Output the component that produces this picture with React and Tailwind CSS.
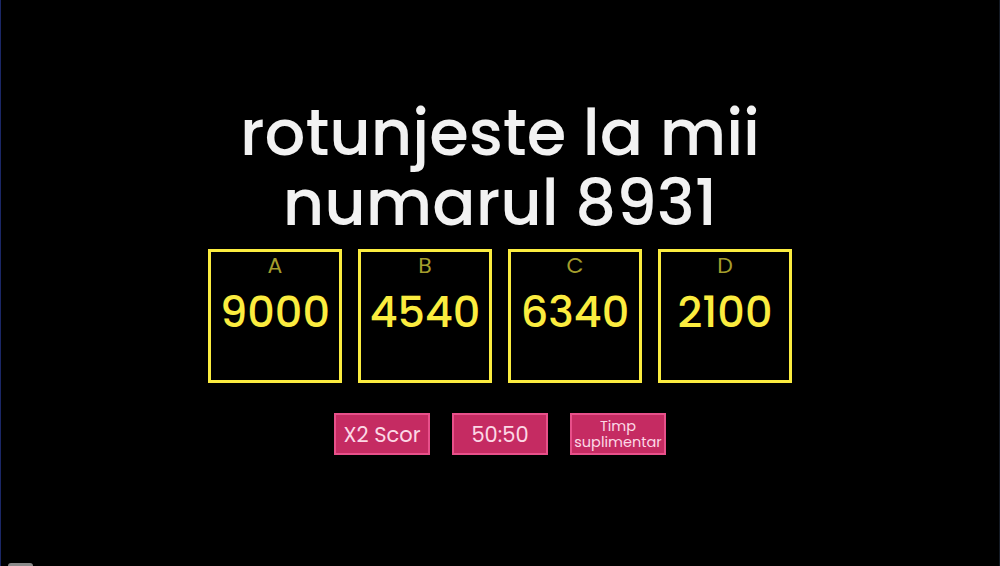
const OPTIONS = [
  { letter: 'A', value: '9000' },
  { letter: 'B', value: '4540' },
  { letter: 'C', value: '6340' },
  { letter: 'D', value: '2100' },
]

const App = () => (
  <div
    className="relative w-[1000px] h-[566px] overflow-hidden bg-black border-l border-l-[#1b2766] border-r border-r-[#141a24]"
    style={{ fontFamily: 'Poppins, Inter, "Noto Sans", sans-serif' }}
  >
    <div className="flex flex-col items-center pt-[98px]">
      <h1 className="text-[64px] leading-[70px] font-medium text-[#f2f2f2] text-center">
        rotunjeste la mii
        <br />
        numarul 8931
      </h1>
      <div className="flex gap-4 mt-[11px]">
        {OPTIONS.map((o) => (
          <div key={o.letter} className="w-[134px] h-[134px] border-[3px] border-[#fbec3f] flex flex-col items-center">
            <span className="mt-[1px] text-[22px] leading-[26px] text-[#a39d2c]">{o.letter}</span>
            <span className="mt-[8px] text-[43px] leading-[50px] font-medium text-[#fbec3f]">{o.value}</span>
          </div>
        ))}
      </div>
      <div className="flex gap-[22px] mt-[30px]">
        <button className="w-[96px] h-[42px] bg-[#c52b62] border-2 border-[#e8508a] text-[#fcd8e6] text-[21px] leading-none">X2 Scor</button>
        <button className="w-[96px] h-[42px] bg-[#c52b62] border-2 border-[#e8508a] text-[#fcd8e6] text-[21px] leading-none">50:50</button>
        <button className="w-[96px] h-[42px] bg-[#c52b62] border-2 border-[#e8508a] text-[#fcd8e6] text-[14.5px] leading-[16px]">Timp<br />suplimentar</button>
      </div>
    </div>
    <div className="absolute left-[7px] bottom-[-3px] w-[25px] h-[6px] rounded-sm bg-[#8a8a8a]" />
  </div>
)

export default App
